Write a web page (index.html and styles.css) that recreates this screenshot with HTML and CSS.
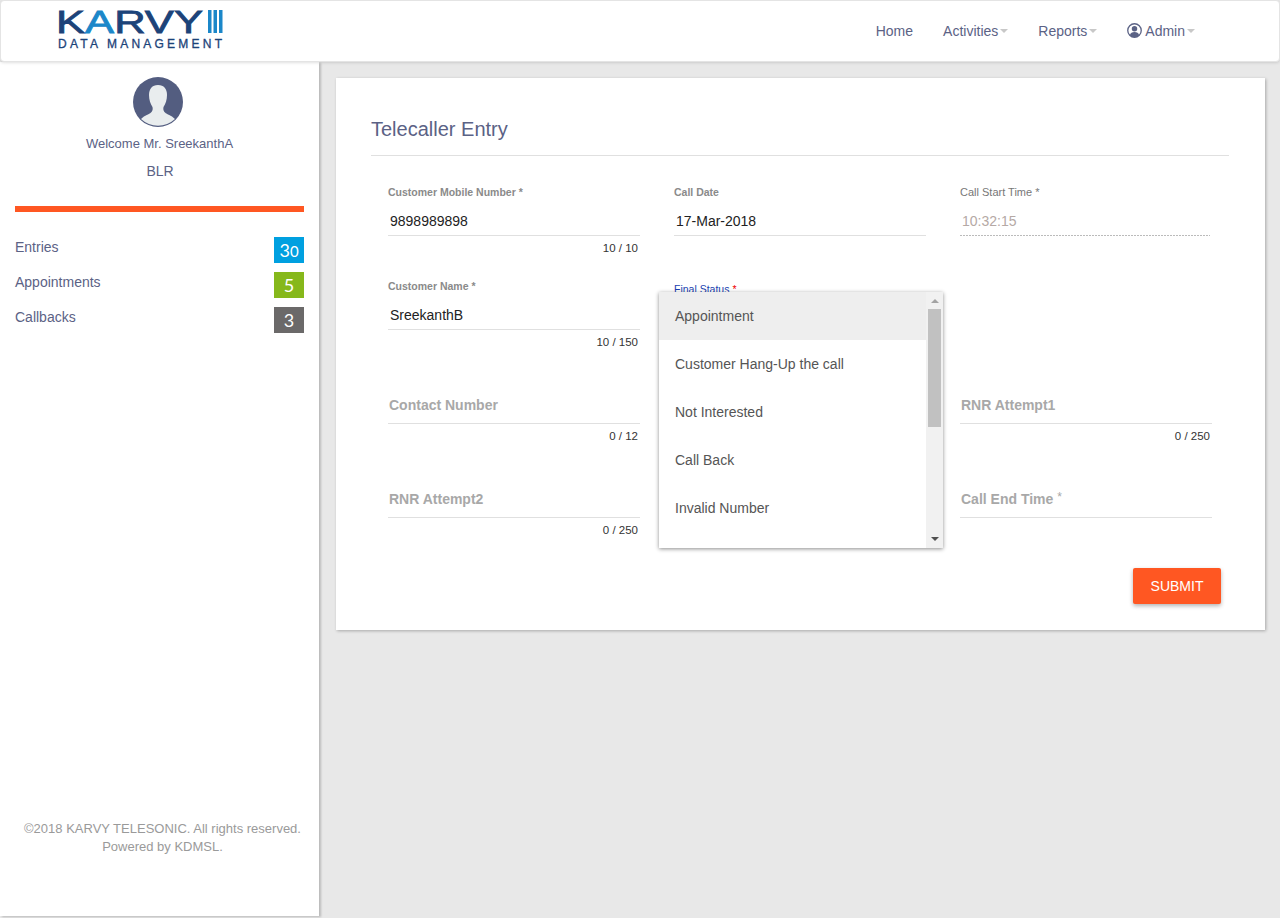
FILE: index.html
```html
<!DOCTYPE html>
<html lang="en">
<head>
  <meta charset="UTF-8">
  <title>Telecaller Entry</title>
  <link rel="stylesheet" href="styles.css">
</head>
<body>
  <header class="topbar">
    <svg class="logo" width="170" height="56" viewBox="0 0 170 56">
      <text class="logo-name" x="0" y="30" textLength="147" lengthAdjust="spacingAndGlyphs">K<tspan class="logo-a">A</tspan>RVY</text>
      <rect class="logo-bar" x="152" y="7" width="3.500" height="23"/>
      <rect class="logo-bar" x="157.500" y="7" width="3.500" height="23"/>
      <rect class="logo-bar" x="163" y="7" width="3.500" height="23"/>
      <text class="logo-sub" x="2" y="45" textLength="164">DATA MANAGEMENT</text>
    </svg>
    <nav class="nav">
      <a class="nav-item">Home</a>
      <a class="nav-item">Activities<span class="caret"></span></a>
      <a class="nav-item">Reports<span class="caret"></span></a>
      <a class="nav-item">
        <svg class="user-icon" width="15" height="15" viewBox="0 0 16 16">
          <circle cx="8" cy="8" r="7.200" fill="none" stroke="#5b6285" stroke-width="1.400"/>
          <circle cx="8" cy="6.200" r="2.900" fill="#5b6285"/>
          <path d="M3 13c.6-2.400 2.500-3.400 5-3.400s4.400 1 5 3.400a7 7 0 0 1-10 0z" fill="#5b6285"/>
        </svg>Admin<span class="caret"></span>
      </a>
    </nav>
  </header>

  <div class="layout">
    <aside class="sidebar">
      <svg class="avatar" width="50" height="50" viewBox="0 0 50 50">
        <circle cx="25" cy="25" r="25" fill="#535d80"/>
        <path d="M25 8c-6 0-9 4-9 10 0 5 1.500 9 3.500 12 .5 2.500 0 4-1.500 5.500-2 2-6 2.500-10 6.500a25 25 0 0 0 34 0c-4-4-8-4.500-10-6.500-1.500-1.500-2-3-1.500-5.500 2-3 3.500-7 3.500-12 0-6-3-10-9-10z" fill="#e9edee"/>
      </svg>
      <p class="welcome">Welcome Mr. SreekanthA</p>
      <p class="branch">BLR</p>
      <div class="divider"></div>
      <ul class="stats">
        <li class="stat"><span>Entries</span><span class="badge badge-blue">3<span class="badge-zero">0</span></span></li>
        <li class="stat"><span>Appointments</span><span class="badge badge-green">5</span></li>
        <li class="stat"><span>Callbacks</span><span class="badge badge-grey">3</span></li>
      </ul>
      <footer class="copyright">©2018 KARVY TELESONIC. All rights reserved.<br>Powered by KDMSL.</footer>
    </aside>

    <main class="content">
      <section class="card">
        <h1 class="card-title">Telecaller Entry</h1>
        <form class="fields">
          <div class="field">
            <label class="field-label">Customer Mobile Number *</label>
            <div class="field-value">9898989898</div>
            <div class="counter">10 / 10</div>
          </div>
          <div class="field">
            <label class="field-label">Call Date</label>
            <div class="field-value">17-Mar-2018</div>
          </div>
          <div class="field">
            <label class="field-label field-label-light">Call Start Time *</label>
            <div class="field-value field-disabled">10:32:15</div>
          </div>

          <div class="field">
            <label class="field-label">Customer Name *</label>
            <div class="field-value">SreekanthB</div>
            <div class="counter">10 / 150</div>
          </div>
          <div class="field">
            <label class="field-label field-label-active">Final Status <span class="required">*</span></label>
            <div class="field-value"></div>
          </div>
          <div class="field"></div>

          <div class="field">
            <div class="field-label"></div>
            <div class="field-value field-empty">Contact Number</div>
            <div class="counter">0 / 12</div>
          </div>
          <div class="field"></div>
          <div class="field">
            <div class="field-label"></div>
            <div class="field-value field-empty">RNR Attempt1</div>
            <div class="counter">0 / 250</div>
          </div>

          <div class="field">
            <div class="field-label"></div>
            <div class="field-value field-empty">RNR Attempt2</div>
            <div class="counter">0 / 250</div>
          </div>
          <div class="field"></div>
          <div class="field">
            <div class="field-label"></div>
            <div class="field-value field-empty">Call End Time <span class="sup">*</span></div>
          </div>
        </form>
        <div class="actions">
          <button class="submit" type="button">SUBMIT</button>
        </div>

        <div class="dropdown">
          <ul class="options">
            <li class="option option-selected">Appointment</li>
            <li class="option">Customer Hang-Up the call</li>
            <li class="option">Not Interested</li>
            <li class="option">Call Back</li>
            <li class="option">Invalid Number</li>
          </ul>
          <div class="scrollbar">
            <span class="arrow arrow-up"></span>
            <span class="thumb"></span>
            <span class="arrow arrow-down"></span>
          </div>
        </div>
      </section>
    </main>
  </div>
</body>
</html>
```

FILE: styles.css
```css
* {
  box-sizing: border-box;
}
html, body {
  height: 100%;
}
body {
  margin: 0;
  display: flex;
  flex-direction: column;
  height: 918px;
  overflow: hidden;
  font-family: "Liberation Sans", Arial, sans-serif;
  font-size: 14px;
  color: #5b6285;
  background-color: #e8e8e8;
}

/* top bar */
.topbar {
  display: flex;
  align-items: center;
  justify-content: space-between;
  height: 62px;
  padding: 0 84px 0 55px;
  background-color: #fff;
  border: 1px solid #e4e4e4;
  border-radius: 4px;
  box-shadow: 0 1px 3px rgba(0, 0, 0, 0.12);
  position: relative;
  z-index: 2;
}
.logo {
  display: block;
}
.logo-name {
  font-family: "Liberation Sans", sans-serif;
  font-size: 32px;
  fill: #1c4379;
  stroke: #1c4379;
  stroke-width: 0.8px;
}
.logo-a {
  fill: #1b87c9;
  stroke: #1b87c9;
}
.logo-bar {
  fill: #1b87c9;
}
.logo-sub {
  font-family: "Liberation Sans", sans-serif;
  font-size: 12px;
  fill: #1c4379;
  stroke: #1c4379;
  stroke-width: 0.3px;
}
.nav {
  display: flex;
  gap: 30px;
  margin-top: -1px;
}
.nav-item {
  display: flex;
  align-items: center;
}
.user-icon {
  margin-right: 3px;
}
.caret {
  width: 0;
  height: 0;
  margin: 1px 0 0 2px;
  border-left: 4px solid transparent;
  border-right: 4px solid transparent;
  border-top: 4px solid #c8c8c8;
}

/* sidebar */
.layout {
  display: flex;
  flex: 1;
  min-height: 0;
}
.sidebar {
  display: flex;
  flex-direction: column;
  align-items: center;
  flex: none;
  width: 319px;
  height: 854px;
  padding: 15px 15px 0;
  background-color: #fff;
  box-shadow: 2px 1px 2px rgba(0, 0, 0, 0.2);
}
.avatar {
  display: block;
  margin-right: 3px;
}
.welcome {
  margin: 8px 0 0;
  font-size: 13px;
  line-height: 18px;
}
.branch {
  margin: 9px 0 0 1px;
  line-height: 18px;
}
.divider {
  align-self: stretch;
  height: 6px;
  margin: 26px 0 25px;
  background-color: #ff5722;
}
.stats {
  align-self: stretch;
  margin: 0;
  padding: 0;
  list-style: none;
}
.stat {
  display: flex;
  justify-content: space-between;
  height: 26px;
  margin-bottom: 9px;
  line-height: 20px;
}
.badge {
  width: 30px;
  height: 26px;
  font-family: Lato, sans-serif;
  font-size: 18px;
  line-height: 26px;
  text-align: center;
  color: #fff;
}
.badge-zero {
  font-size: 15px;
}
.badge-blue {
  background-color: #00a0e0;
}
.badge-green {
  background-color: #86b81b;
}
.badge-grey {
  background-color: #6b6969;
}
.copyright {
  margin: auto 0 60px 6px;
  font-size: 13px;
  line-height: 18px;
  text-align: center;
  white-space: nowrap;
  color: #9a9a9a;
}

/* form card */
.content {
  flex: 1;
  padding: 16px 15px 0 17px;
}
.card {
  position: relative;
  height: 552px;
  padding: 37px 36px 0 35px;
  background-color: #fff;
  box-shadow: 1px 1px 3px rgba(0, 0, 0, 0.28);
}
.card-title {
  margin: 0;
  padding-bottom: 12px;
  font-size: 20px;
  font-weight: normal;
  line-height: 28px;
  border-bottom: 1px solid #e0e0e0;
}
.fields {
  display: grid;
  grid-template-columns: repeat(3, 252px);
  grid-auto-rows: 94px;
  column-gap: 34px;
  padding: 29px 0 0 17px;
}
.field-label {
  display: block;
  height: 14px;
  font-size: 10.5px;
  font-weight: bold;
  line-height: 14px;
  color: #8a8a8a;
}
.field-label-light {
  font-size: 11px;
  font-weight: normal;
  color: #777;
}
.field-label-active {
  padding-top: 3px;
  font-weight: normal;
  color: #1a3fb0;
}
.required {
  color: #e00;
}
.field-value {
  height: 37px;
  padding: 8px 2px 0;
  font-size: 14px;
  line-height: 28px;
  color: #222;
  border-bottom: 1px solid #e0e0e0;
}
.field-disabled {
  margin-right: 2px;
  color: #b5a9a5;
  border-bottom: 0;
  background: linear-gradient(to right, #777 33%, transparent 0) bottom / 3px 1px repeat-x;
}
.field-empty {
  padding: 8px 1px 0;
  line-height: 20px;
  font-weight: bold;
  color: #a8a8a8;
}
.sup {
  font-size: 12px;
  font-weight: normal;
  line-height: 0;
  vertical-align: 3px;
}
.counter {
  padding: 5px 2px 0 0;
  font-size: 11.5px;
  line-height: 14px;
  text-align: right;
  color: #333;
}
.actions {
  display: flex;
  justify-content: flex-end;
  margin: 7px 8px 0 0;
}
.submit {
  width: 88px;
  height: 36px;
  padding: 0;
  font-family: inherit;
  font-size: 14px;
  color: #fff;
  background-color: #ff5722;
  border: 0;
  border-radius: 2px;
  box-shadow: 0 2px 4px rgba(0, 0, 0, 0.3);
}

/* open select menu */
.dropdown {
  position: absolute;
  left: 323px;
  top: 214px;
  display: flex;
  width: 284px;
  height: 256px;
  background-color: #fff;
  box-shadow: 0 1px 4px rgba(0, 0, 0, 0.45);
}
.options {
  flex: 1;
  margin: 0;
  padding: 0;
  list-style: none;
}
.option {
  height: 48px;
  padding-left: 16px;
  line-height: 48px;
  color: #555;
}
.option-selected {
  background-color: #eee;
}
.scrollbar {
  display: flex;
  flex-direction: column;
  align-items: center;
  width: 17px;
  background-color: #f1f1f1;
}
.arrow {
  width: 0;
  height: 0;
  border-left: 4px solid transparent;
  border-right: 4px solid transparent;
}
.arrow-up {
  margin-top: 7px;
  border-bottom: 4px solid #a3a3a3;
}
.thumb {
  width: 13px;
  height: 118px;
  margin-top: 6px;
  background-color: #c1c1c1;
}
.arrow-down {
  margin-top: auto;
  margin-bottom: 7px;
  border-top: 4px solid #505050;
}
```
